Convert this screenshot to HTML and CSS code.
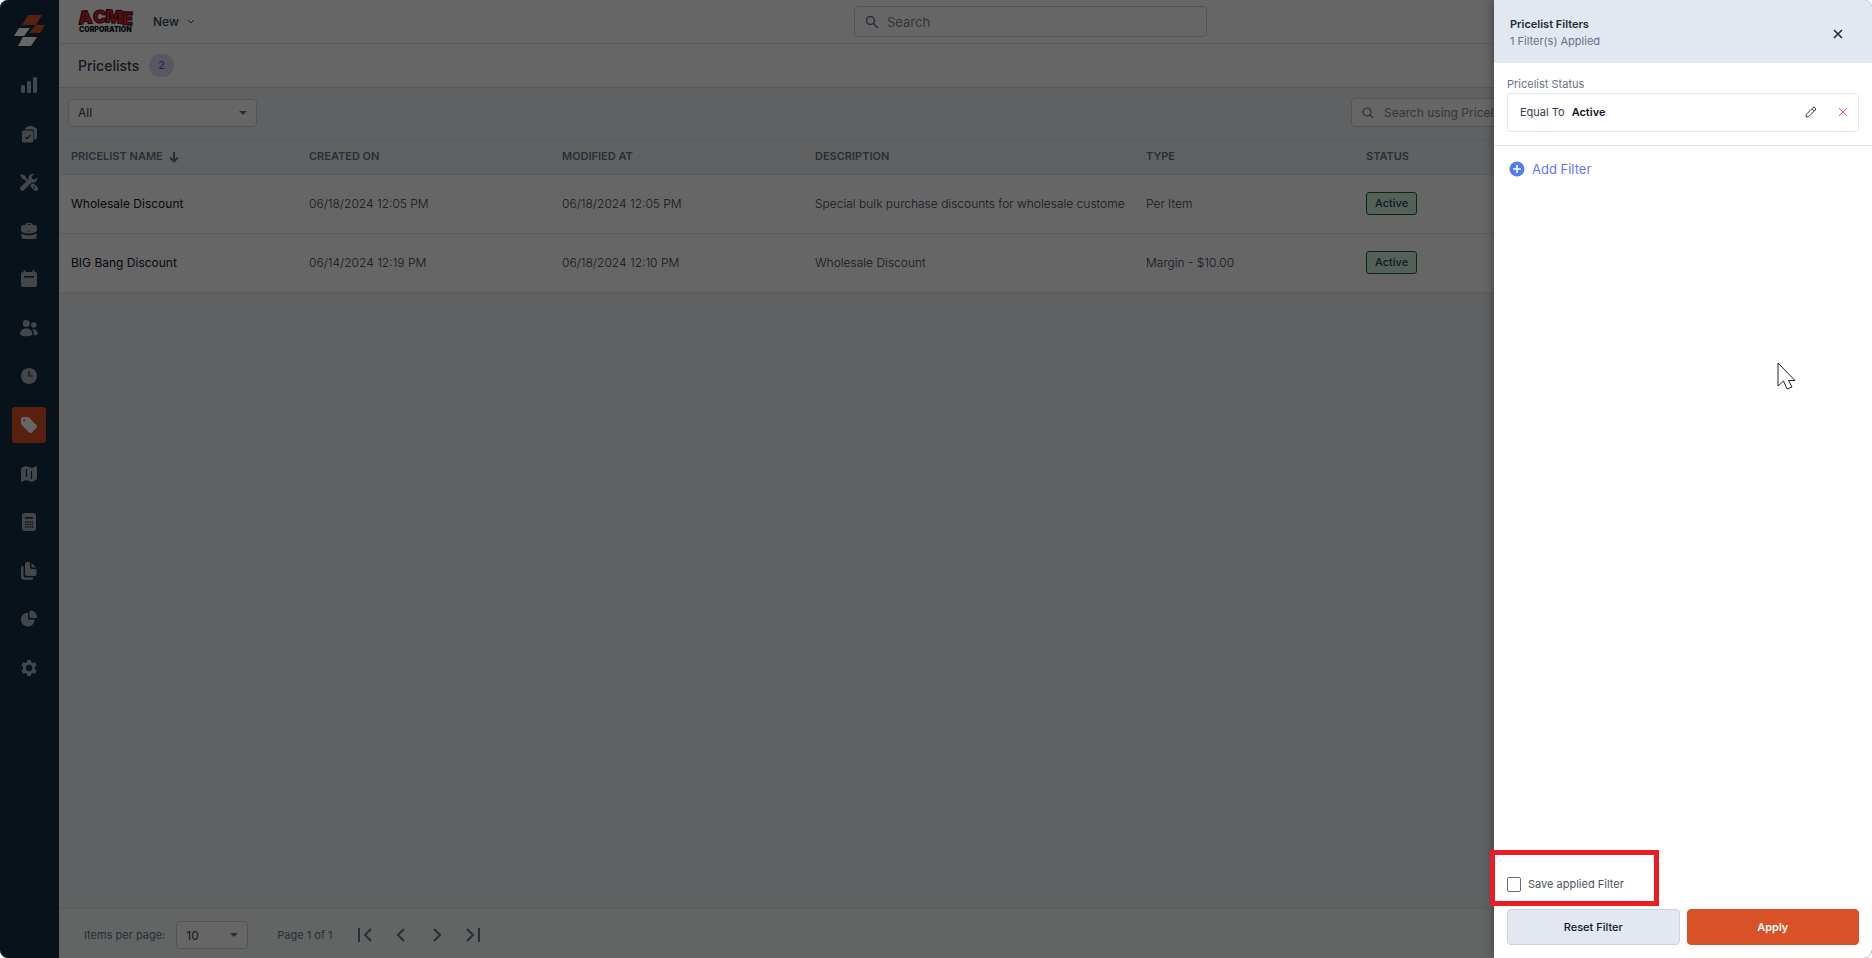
FILE: index.html
```
<!DOCTYPE html>
<html lang="en">
<head>
    <meta charset="UTF-8">
    <meta name="viewport" content="width=device-width, initial-scale=1.0">
    <title>Pricelists</title>
    <link rel="stylesheet" href="styles.css">
</head>

<body>
    <div class="app">
        <aside class="sidebar">
            <a href="#" class="logo" aria-label="Home">
                <svg width="32" height="32" viewBox="0 0 32 32">
                    <path d="M14 0h14l-6 10H8z" fill="#d95126" />
                    <path d="M22 10h9l-5 8H15z" fill="#d95126" />
                    <path d="M5 13h11l-6 8H0z" fill="#fff" />
                    <path d="M9 22h14l-6 9H4z" fill="#fff" />
                </svg>
            </a>
            <nav class="menu">
                <a href="#" class="menu-item" aria-label="Dashboard">
                    <svg viewBox="0 0 18 18"><rect x="1" y="9" width="4" height="8" rx="1.5" /><rect x="7" y="5" width="4" height="12" rx="1.5" /><rect x="13" y="1" width="4" height="16" rx="1.5" /></svg>
                </a>
                <a href="#" class="menu-item" aria-label="Tasks">
                    <svg viewBox="0 0 18 18"><path d="M6 2.500h1A2.200 2.200 0 0 1 9 1h3a2.200 2.200 0 0 1 2 1.500h1A2 2 0 0 1 17 4.500v8a2 2 0 0 1-2 2h-.8V7A2.500 2.500 0 0 0 11.700 4.500H5A2 2 0 0 1 6 2.500z" /><rect x="2" y="5.500" width="11.500" height="12" rx="2" /><path class="cut" d="M5.500 12l1.700 1.700L10.500 10" /></svg>
                </a>
                <a href="#" class="menu-item" aria-label="Services">
                    <svg viewBox="0 0 18 18"><path d="M1 1l4 1.500 1.500 3 3 3-1.500 1.500-3-3-3-1.500L.3 2z" /><path d="M17.300 4.200l-2.600 2.300-2.400-.6-.7-2.400L14 .9a4.600 4.600 0 0 0-5.500 5.800L.8 13.800a2.300 2.300 0 0 0 3.300 3.300l7.300-7.600a4.600 4.600 0 0 0 5.900-5.300z" /><path d="M11.800 10.500l-1.600 2.500 4 4.200a2.200 2.200 0 0 0 3.200-3.100l-3.600-3.400z" /><path class="cut" d="M13.500 13.500l1.500 1.500" /></svg>
                </a>
                <a href="#" class="menu-item" aria-label="Jobs">
                    <svg viewBox="0 0 18 18"><path d="M5 3a2.500 2.500 0 0 1 2.500-2h3A2.500 2.500 0 0 1 13 3h1.500A2.500 2.500 0 0 1 17 5.500V9c-2 2-5 2.500-8 2.500S3 11 1 9V5.500A2.500 2.500 0 0 1 3.500 3zm2 0h4c-.2-.6-.5-.8-1-.8H8c-.5 0-.8.200-1 .8z" /><path d="M1.500 11.200C4 13 7 13.200 9 13.200s5-.2 7.500-2v3.300a2.500 2.500 0 0 1-2.500 2.500H4a2.500 2.500 0 0 1-2.500-2.500z" /><circle class="hole" cx="9" cy="9" r=".7" /></svg>
                </a>
                <a href="#" class="menu-item" aria-label="Schedule">
                    <svg viewBox="0 0 18 18"><path d="M3 2h.500V1a1 1 0 0 1 2 0v1h7V1a1 1 0 0 1 2 0v1h.5a2 2 0 0 1 2 2v11a2 2 0 0 1-2 2H3a2 2 0 0 1-2-2V4a2 2 0 0 1 2-2z" /><rect class="hole" x="4" y="6" width="10" height="1.600" /></svg>
                </a>
                <a href="#" class="menu-item" aria-label="Customers">
                    <svg viewBox="0 0 18 18"><circle cx="6.300" cy="4.500" r="3.500" /><circle cx="13.800" cy="6" r="2.800" /><path d="M0 15c0-3.500 3-5.500 6.300-5.500s6 2 6 5.500c0 1.500-2.800 2.200-6 2.200S0 16.500 0 15z" /><path d="M12.300 10.300c3-.4 5.500 1.700 5.500 4.200 0 1-1.600 1.800-4.200 1.900.5-2 .2-4.300-1.300-6.100z" /></svg>
                </a>
                <a href="#" class="menu-item" aria-label="Timesheet">
                    <svg viewBox="0 0 18 18"><circle cx="9" cy="9" r="8" /><path class="cut" d="M9 4v5h4" /></svg>
                </a>
                <a href="#" class="menu-item active" aria-label="Pricelists">
                    <svg viewBox="0 0 18 18"><path d="M1 3a2 2 0 0 1 2-2h4.500a2 2 0 0 1 1.400.6l7.500 7.500a2 2 0 0 1 0 2.800l-4.500 4.500a2 2 0 0 1-2.800 0L1.600 8.900A2 2 0 0 1 1 7.500z" /><circle class="hole" cx="4.300" cy="4.300" r="1" /></svg>
                </a>
                <a href="#" class="menu-item" aria-label="Map">
                    <svg viewBox="0 0 18 18"><path d="M1 4.500C1 3 2 2.500 3 2l3-1 6 2 3.500-1.600c.8-.3 1.500 0 1.500.8V13c0 1-.5 1.600-1.500 2L12 17l-6-2-3.500 1.600c-.8.300-1.500 0-1.500-.8z" /><path class="cut" d="M6.500 4v8M11.500 6v8" /></svg>
                </a>
                <a href="#" class="menu-item" aria-label="Accounting">
                    <svg viewBox="0 0 18 18"><rect x="2" y="0" width="14" height="18" rx="3" /><rect class="hole" x="5" y="4" width="8" height="1.600" /><path class="dots" d="M5 9h8M5 11.500h8M5 14h8" /></svg>
                </a>
                <a href="#" class="menu-item" aria-label="Documents">
                    <svg viewBox="0 0 18 18"><path d="M7 0h3v4.500A2.200 2.200 0 0 0 12.200 7H16.500v5a2 2 0 0 1-2 2H7a2 2 0 0 1-2-2V2a2 2 0 0 1 2-2z" /><path d="M11.500.8l4.500 4.700h-3.500a1 1 0 0 1-1-1z" /><path d="M1 6a2 2 0 0 1 2.500-2v9.500a2 2 0 0 0 2 2H13a2 2 0 0 1-2 2.300H4a3 3 0 0 1-3-3z" /></svg>
                </a>
                <a href="#" class="menu-item" aria-label="Reports">
                    <svg viewBox="0 0 18 18"><path d="M8 2.700V9.500h6.700A6.900 6.900 0 1 1 8 2.700z" /><path d="M9.500 1.500c0-.8.3-1 1-1A7 7 0 0 1 17 7c0 .7-.3 1-1 1H9.500z" /></svg>
                </a>
                <a href="#" class="menu-item" aria-label="Settings">
                    <svg viewBox="0 0 18 18"><path fill-rule="evenodd" d="M7.300 1h3.400l.6 2.300 1.200.7 2.300-.7 1.800 3-1.700 1.700v2l1.700 1.700-1.800 3-2.300-.7-1.200.7-.6 2.300H7.300L6.700 14.700 5.500 14l-2.300.7-1.800-3L3.100 10V8L1.400 6.300l1.800-3 2.300.7 1.200-.7zM9 5.800a3.200 3.200 0 1 0 0 6.400 3.200 3.200 0 0 0 0-6.400z" /></svg>
                </a>
            </nav>
        </aside>

        <main class="main">
            <header class="topbar">
                <div class="topbar-left">
                    <svg class="acme" width="60" height="28" viewBox="0 0 60 28" aria-label="Acme Corporation">
                        <g class="acme-name">
                            <text x="1" y="18" transform="rotate(-5 8 12)">A</text>
                            <text x="16" y="17">C</text>
                            <text x="28" y="17" transform="rotate(4 36 12)">M</text>
                            <text x="45" y="19" transform="rotate(2 50 12)">E</text>
                        </g>
                        <text class="acme-sub" x="2" y="26">CORPORATION</text>
                    </svg>
                    <button class="new-btn" type="button">New
                        <svg width="8" height="6" viewBox="0 0 8 6"><path d="M1 1l3 3 3-3" fill="none" stroke="currentColor" /></svg>
                    </button>
                </div>
                <label class="search">
                    <svg width="14" height="14" viewBox="0 0 14 14"><circle cx="5.500" cy="5.500" r="4" /><path d="M8.500 8.500l4.500 4.500" /></svg>
                    <input type="text" placeholder="Search" aria-label="Search">
                </label>
            </header>

            <div class="title-row">
                <h1>Pricelists</h1>
                <span class="count">2</span>
            </div>

            <div class="filter-row">
                <label class="select view-select">
                    <select aria-label="View">
                        <option>All</option>
                    </select>
                </label>
                <label class="search list-search">
                    <svg width="12" height="12" viewBox="0 0 12 12"><circle cx="5" cy="5" r="4" /><path d="M8 8l3 3" /></svg>
                    <input type="text" placeholder="Search using Pricelist Name" aria-label="Search using Pricelist Name">
                </label>
            </div>

            <table class="price-table">
                <thead>
                    <tr>
                        <th class="col-name">PRICELIST NAME
                            <svg width="10" height="12" viewBox="0 0 10 12"><path d="M5 1v9M1 6.500l4 4 4-4" fill="none" stroke="currentColor" stroke-width="2" /></svg>
                        </th>
                        <th class="col-date">CREATED ON</th>
                        <th class="col-date">MODIFIED AT</th>
                        <th class="col-desc">DESCRIPTION</th>
                        <th class="col-type">TYPE</th>
                        <th>STATUS</th>
                    </tr>
                </thead>
                <tbody>
                    <tr>
                        <td class="name">Wholesale Discount</td>
                        <td>06/18/2024 12:05 PM</td>
                        <td>06/18/2024 12:05 PM</td>
                        <td>Special bulk purchase discounts for wholesale custome</td>
                        <td>Per Item</td>
                        <td><span class="status">Active</span></td>
                    </tr>
                    <tr>
                        <td class="name">BIG Bang Discount</td>
                        <td>06/14/2024 12:19 PM</td>
                        <td>06/18/2024 12:10 PM</td>
                        <td>Wholesale Discount</td>
                        <td>Margin - $10.00</td>
                        <td><span class="status">Active</span></td>
                    </tr>
                </tbody>
            </table>

            <footer class="pager">
                <label for="pageSize">Items per page:</label>
                <span class="select size-select">
                    <select id="pageSize">
                        <option>10</option>
                    </select>
                </span>
                <span class="page-info">Page 1 of 1</span>
                <div class="pager-buttons">
                    <button type="button" aria-label="First page"><svg viewBox="0 0 16 16"><path d="M2 1v14M14 2L8 8l6 6" /></svg></button>
                    <button type="button" aria-label="Previous page"><svg viewBox="0 0 16 16"><path d="M11 2L5 8l6 6" /></svg></button>
                    <button type="button" aria-label="Next page"><svg viewBox="0 0 16 16"><path d="M5 2l6 6-6 6" /></svg></button>
                    <button type="button" aria-label="Last page"><svg viewBox="0 0 16 16"><path d="M2 2l6 6-6 6M14 1v14" /></svg></button>
                </div>
            </footer>
        </main>

        <div class="overlay"></div>

        <section class="drawer">
            <header class="drawer-header">
                <div>
                    <h2>Pricelist Filters</h2>
                    <p>1 Filter(s) Applied</p>
                </div>
                <button type="button" class="icon-btn" aria-label="Close">
                    <svg width="10" height="10" viewBox="0 0 10 10"><path d="M1 1l8 8M9 1L1 9" fill="none" stroke="#1e293b" stroke-width="1.600" /></svg>
                </button>
            </header>

            <div class="applied">
                <h3>Pricelist Status</h3>
                <div class="filter-card">
                    <span>Equal To</span>
                    <strong>Active</strong>
                    <button type="button" class="icon-btn edit" aria-label="Edit filter">
                        <svg width="12" height="12" viewBox="0 0 12 12"><path d="M1.500 8.200L8 1.700a1.400 1.400 0 0 1 2 0l.3.3a1.400 1.400 0 0 1 0 2L3.800 10.500 1 11zM7 2.700L9.300 5" fill="none" stroke="#334155" /></svg>
                    </button>
                    <button type="button" class="icon-btn" aria-label="Remove filter">
                        <svg width="10" height="10" viewBox="0 0 10 10"><path d="M1 1l8 8M9 1L1 9" fill="none" stroke="#f05252" /></svg>
                    </button>
                </div>
            </div>

            <button type="button" class="add-filter">
                <svg width="16" height="16" viewBox="0 0 16 16"><circle cx="8" cy="8" r="7.500" fill="#4f7df3" /><path d="M8 4v8M4 8h8" stroke="#fff" stroke-width="1.600" /></svg>
                Add Filter
            </button>

            <div class="drawer-footer">
                <div class="save-row">
                    <input type="checkbox" id="saveFilter">
                    <label for="saveFilter">Save applied Filter</label>
                    <span class="highlight"></span>
                </div>
                <div class="actions">
                    <button type="button" class="btn btn-reset">Reset Filter</button>
                    <button type="button" class="btn btn-apply">Apply</button>
                </div>
            </div>

            <svg class="cursor" width="20" height="29" viewBox="0 0 20 29"><path d="M1 1v23l5.500-5L10 27l5-2-3.500-6.500H18z" fill="#fff" stroke="#222" /></svg>
        </section>
    </div>
</body>

</html>
```

FILE: styles.css
```
* {
    box-sizing: border-box;
}

body {
    margin: 0;
    background-color: #ffffff;
    font-family: Inter, "Liberation Sans", sans-serif;
    font-size: 12px;
    color: #334155;
}

button,
input,
select {
    font-family: inherit;
    font-size: inherit;
    color: inherit;
}

button {
    padding: 0;
    border: none;
    background: none;
}

h1,
h2,
h3,
p {
    margin: 0;
}

.app {
    position: relative;
    display: flex;
    min-height: 100vh;
    border-radius: 8px;
    overflow: hidden;
}

/* Sidebar */
.sidebar {
    flex: 0 0 59px;
    padding-top: 15px;
    background-color: #122d44;
}

.logo {
    display: block;
    height: 52px;
    padding-left: 14px;
}

.menu {
    display: flex;
    flex-direction: column;
    align-items: center;
    justify-content: space-between;
    height: 619px;
}

.menu-item {
    display: flex;
    align-items: center;
    justify-content: center;
    width: 34px;
    height: 36px;
    margin-right: 1px;
    border-radius: 3px;
}

.menu-item svg {
    width: 18px;
    height: 18px;
    fill: #aab2ba;
}

.menu-item.active {
    background-color: #d95126;
}

.menu-item.active svg {
    fill: #ffffff;
}

.menu-item .cut {
    fill: none;
    stroke: #122d44;
    stroke-width: 1.2;
}

.menu-item .hole {
    fill: #122d44;
}

.menu-item.active .hole {
    fill: #d95126;
}

.menu-item .dots {
    stroke: #122d44;
    stroke-width: 1.6;
    stroke-dasharray: 1.4 0.8;
}

/* Main area */
.main {
    flex: 1;
    display: flex;
    flex-direction: column;
    min-width: 0;
    background-color: #f1f3f7;
}

.topbar {
    display: grid;
    grid-template-columns: 795px 353px 1fr;
    align-items: center;
    height: 44px;
    background-color: #ffffff;
    border-bottom: 1px solid #e2e8f0;
}

.topbar-left {
    display: flex;
    align-items: center;
    gap: 16px;
    padding-left: 18px;
}

.acme {
    margin-bottom: 4px;
}

.acme-name {
    font-size: 18px;
    font-weight: 900;
    fill: #e8222e;
    stroke: #3a0a0a;
    stroke-width: 1;
}

.acme-sub {
    font-size: 7px;
    font-weight: 900;
    fill: #111111;
}

.new-btn {
    display: flex;
    align-items: center;
    gap: 8px;
    font-weight: 500;
}

.search {
    display: flex;
    align-items: center;
    gap: 8px;
    height: 31px;
    padding: 0 10px;
    background-color: #ffffff;
    border: 1px solid #cbd5e1;
    border-radius: 4px;
}

.search svg {
    flex: none;
    fill: none;
    stroke: #64748b;
    stroke-width: 1.5;
}

.search input {
    flex: 1;
    min-width: 0;
    padding: 0;
    border: none;
    outline: none;
    background: none;
    font-size: 13px;
}

.search input::placeholder {
    color: #7c889b;
}

.title-row {
    display: flex;
    align-items: center;
    gap: 10px;
    height: 44px;
    padding-left: 19px;
    background-color: #ffffff;
    border-bottom: 1px solid #d9dee6;
}

.title-row h1 {
    font-size: 14px;
    font-weight: 500;
}

.count {
    width: 25px;
    height: 23px;
    border-radius: 12px;
    background-color: #dcd9f5;
    color: #5b4bd6;
    font-size: 11px;
    line-height: 23px;
    text-align: center;
}

.filter-row {
    display: flex;
    align-items: center;
    justify-content: space-between;
    height: 52px;
    padding: 0 168px 2px 9px;
    border-bottom: 1px solid #e2e8f0;
}

.list-search {
    gap: 10px;
    width: 353px;
    height: 29px;
}

.list-search svg {
    stroke-width: 1.2;
}

.list-search input {
    font-size: 12px;
}

.select {
    position: relative;
    display: block;
}

.select select {
    width: 100%;
    height: 28px;
    padding: 0 9px;
    appearance: none;
    background-color: #ffffff;
    border: 1px solid #cbd5e1;
    border-radius: 4px;
}

/* Drop-down arrow */
.select::after {
    content: "";
    position: absolute;
    top: 50%;
    right: 10px;
    margin-top: -2px;
    border: 4px solid transparent;
    border-top-color: #64748b;
    border-bottom: none;
}

.view-select {
    width: 189px;
}

/* Table */
.price-table {
    width: 100%;
    table-layout: fixed;
    border-collapse: separate;
    border-spacing: 0;
}

.price-table th,
.price-table td {
    padding: 0 12px 2px;
    border-bottom: 1px solid #e2e8f0;
    text-align: left;
    white-space: nowrap;
}

.price-table th {
    height: 35px;
    color: #64748b;
    font-size: 11px;
    font-weight: 600;
}

.price-table th svg {
    margin-left: 4px;
    vertical-align: -3px;
}

.price-table td {
    height: 59px;
    background-color: #ffffff;
    font-weight: 300;
}

.price-table .name {
    color: #0f172a;
    font-weight: 400;
}

.col-name {
    width: 238px;
}

.col-date {
    width: 253px;
}

.col-desc {
    width: 331px;
}

.col-type {
    width: 220px;
}

.status {
    display: inline-block;
    padding: 0 8px;
    border: 1px solid #166534;
    border-radius: 3px;
    background-color: #d1f0dc;
    color: #334155;
    font-size: 11px;
    font-weight: 500;
    line-height: 21px;
}

/* Pagination */
.pager {
    display: flex;
    align-items: center;
    height: 50px;
    margin-top: auto;
    padding: 3px 25px 0;
    background-color: #f8f9fb;
    border-top: 1px solid #e2e8f0;
    color: #64748b;
    font-size: 11px;
}

.size-select {
    width: 72px;
    margin: 0 29px 0 11px;
    font-size: 12px;
}

.size-select select {
    color: #334155;
}

.pager-buttons {
    display: flex;
    gap: 20px;
    margin-left: 24px;
}

.pager-buttons button {
    display: flex;
}

.pager-buttons svg {
    width: 16px;
    height: 16px;
    fill: none;
    stroke: #64748b;
    stroke-width: 2;
}

/* Filter drawer */
.overlay {
    position: absolute;
    inset: 0;
    background-color: rgba(0, 0, 0, 0.6);
}

.drawer {
    position: absolute;
    top: 0;
    right: 0;
    bottom: 0;
    display: flex;
    flex-direction: column;
    width: 378px;
    background-color: #ffffff;
    border-radius: 0 8px 8px 0;
    box-shadow: 0 0 12px rgba(0, 0, 0, 0.4);
}

.drawer-header {
    display: flex;
    align-items: center;
    justify-content: space-between;
    height: 63px;
    padding: 3px 29px 0 16px;
    background-color: #e2e7f0;
    border-radius: 0 8px 0 0;
}

.drawer-header h2 {
    color: #1e293b;
    font-size: 11px;
    font-weight: 600;
    line-height: 17px;
}

.drawer-header p {
    color: #64748b;
    font-size: 11px;
    line-height: 17px;
}

.drawer-header .icon-btn {
    padding-top: 2px;
}

.icon-btn {
    display: flex;
}

.applied {
    padding: 13px;
    border-bottom: 1px solid #e2e8f0;
}

.applied h3 {
    margin-bottom: 1px;
    color: #64748b;
    font-size: 11px;
    font-weight: 400;
    line-height: 16px;
}

.filter-card {
    display: flex;
    align-items: center;
    gap: 7px;
    height: 39px;
    padding: 0 10px 2px 12px;
    border: 1px solid #e2e7f0;
    border-radius: 3px;
    font-size: 11px;
}

.filter-card strong {
    color: #0f172a;
    font-weight: 600;
}

.filter-card .edit {
    margin-left: auto;
    margin-right: 14px;
}

.add-filter {
    display: flex;
    align-items: center;
    align-self: flex-start;
    gap: 7px;
    margin: 15px;
    color: #6677f5;
    font-size: 13px;
}

.drawer-footer {
    margin-top: auto;
    padding: 0 13px 13px;
}

.save-row {
    position: relative;
    display: flex;
    align-items: center;
    gap: 7px;
    height: 16px;
    margin-bottom: 17px;
    color: #4b5563;
    font-size: 11px;
}

.save-row input {
    width: 14px;
    height: 15px;
    margin: 0;
    appearance: none;
    border: 1px solid #64698b;
    border-radius: 2px;
}

.highlight {
    position: absolute;
    top: -26px;
    left: -17px;
    width: 169px;
    height: 56px;
    border: 5px solid #ed1c24;
    pointer-events: none;
}

.actions {
    display: flex;
    gap: 7px;
}

.btn {
    flex: 1;
    height: 36px;
    border: 1px solid #cbd5e1;
    border-radius: 4px;
    font-size: 11px;
}

.btn-reset {
    background-color: #e2e7f0;
    color: #0f172a;
    font-weight: 500;
}

.btn-apply {
    border-color: #d95126;
    background-color: #d95126;
    color: #ffffff;
    font-weight: 600;
}

.cursor {
    position: absolute;
    top: 362px;
    left: 283px;
}
```
